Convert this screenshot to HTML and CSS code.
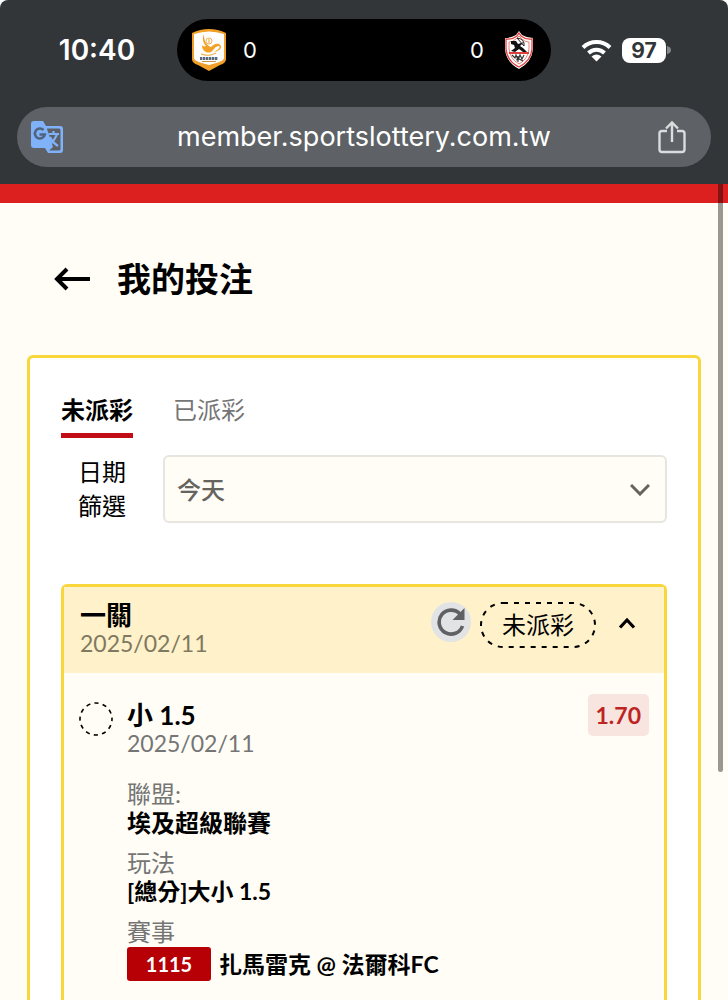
FILE: index.html
```html
<!DOCTYPE html>
<html lang="zh-Hant">
<head>
<meta charset="utf-8">
<meta name="viewport" content="width=device-width, initial-scale=1">
<title>我的投注</title>
<link rel="stylesheet" href="styles.css">
</head>
<body>
<div class="screen">
  <header class="chrome">
    <div class="status">
      <time class="clock">10:40</time>
      <div class="island">
        <svg class="crest-home" width="36" height="42" viewBox="0 0 36 42" aria-hidden="true">
          <path d="M1 4Q9 0 18 0T35 4V30Q35 34 29 36L18 42L7 36Q1 34 1 30Z" fill="#f0a029"/>
          <path d="M3 5Q11 2.500 18 2.500T33 5V29Q33 31 27 33.500L18 36L9 33.500Q3 31 3 29Z" fill="#fff"/>
          <path d="M13 5C11 10 12 14 15 17C13 18 12 17 11 16C11 22 16 25 20 23C23 21 24 17 28 17C30 18 27 21 23 23C30 22 32 17 28 15C25 14 22 16 20 18C15 16 13 12 13 5Z" fill="#f2a126"/>
          <circle cx="18" cy="12" r="3" fill="#fff" stroke="#eeb45d" stroke-width="1"/>
          <path d="M18 10v4M10 25q8 3 15 -1" fill="none" stroke="#f0a029" stroke-width="1"/>
          <path d="M9 29.500h18" stroke="#59687d" stroke-width="3" stroke-dasharray="2.400 .6"/>
          <path d="M11 32.500h14" stroke="#cb9346" stroke-width="1"/>
        </svg>
        <span class="score">0</span>
        <span class="score score-away">0</span>
        <svg class="crest-away" width="30" height="38" viewBox="0 0 30 38" aria-hidden="true">
          <path d="M15 0L18 4Q23 7 29 7V18Q28 31 15 38Q2 31 1 18V7Q7 7 12 4Z" fill="#fff"/>
          <path d="M15 2L17 5Q22 9 28 8V18Q27 30 15 36Q3 30 2 18V8Q8 9 13 5Z" fill="none" stroke="#df3f3b" stroke-width="1.3"/>
          <path d="M15 5L18 8Q21 11 25 11V18Q24 28 15 33Q6 28 5 18V11Q9 11 12 8Z" fill="#fff" stroke="#df6059" stroke-width=".8"/>
          <path d="M5 22h20" stroke="#df3f3b" stroke-width="2"/>
          <path d="M7 10h5l2 3 6-2-4 4 3 2 4 4h-4l-4-3-4 3-4-1 4-3-1-3-3-1Z" fill="#111"/>
          <path d="M13 7q8 1 7 8M13 7l7 8" stroke="#222" fill="none"/>
          <path d="M8 24l3 3 1-3 2 5 2-5 2 4 2-4M12 29l3-1 4 2M14 25v6" stroke="#333" stroke-width="1.2" fill="none"/>
        </svg>
      </div>
      <div class="signals">
        <svg width="31" height="24" viewBox="0 0 31 24" role="img" aria-label="Wi-Fi">
          <g fill="none" stroke="#fff" stroke-width="4">
            <path d="M2 9.500A19.500 19.500 0 0 1 29 9.500"/>
            <path d="M7.500 15A11.500 11.500 0 0 1 23.500 15"/>
          </g>
          <path d="M10.500 18.500Q15.500 14.500 20.500 18.500L15.500 23.500Z" fill="#fff"/>
        </svg>
        <span class="battery">97</span>
        <svg class="battery-cap" width="4" height="8" viewBox="0 0 4 8" aria-hidden="true"><path d="M0 0Q4 1 4 4T0 8Z" fill="#85898c"/></svg>
      </div>
    </div>
    <div class="address">
      <button class="icon-button" aria-label="翻譯">
        <svg width="34" height="34" viewBox="0 0 34 34" aria-hidden="true">
          <path d="M4 1H13L16 6H30Q33 6 33 9V30Q33 33 30 33H18L15 28H4Q1 28 1 25V4Q1 1 4 1Z" fill="#80b2fa"/>
          <path d="M17 8.500H29Q30.500 8.500 30.500 10V29Q30.500 30.500 29 30.500H19L23 27L17 9Z" fill="#5b6064"/>
          <path d="M18.500 14H29M23.500 11V14M27 14Q25 20 20 24M20 17Q22 22 28 26" fill="none" stroke="#80b2fa" stroke-width="2.200"/>
          <path d="M13.500 10A5 5 0 1 0 14.800 14.500H9.500" fill="none" stroke="#50647f" stroke-width="2.600"/>
        </svg>
      </button>
      <span class="url">member.sportslottery.com.tw</span>
      <button class="icon-button" aria-label="分享">
        <svg width="28" height="34" viewBox="0 0 28 34" fill="none" stroke="#dadcde" stroke-width="2.400" aria-hidden="true">
          <path d="M9 11H4Q1.500 11 1.500 13.500V29.500Q1.500 32 4 32H24Q26.500 32 26.500 29.500V13.500Q26.500 11 24 11H19"/>
          <path d="M14 22V2.500M8 8.500L14 2.500L20 8.500"/>
        </svg>
      </button>
    </div>
  </header>

  <main class="page">
    <div class="title-row">
      <button class="back" aria-label="返回">
        <svg width="36" height="24" viewBox="0 0 36 24" fill="none" stroke="#000" stroke-width="4" aria-hidden="true"><path d="M36 12H3M13 2L3 12L13 22"/></svg>
      </button>
      <h1>我的投注</h1>
    </div>

    <section class="panel">
      <nav class="tabs">
        <button class="tab tab-active">未派彩</button>
        <button class="tab">已派彩</button>
      </nav>

      <div class="filter">
        <label for="date-filter">日期<br>篩選</label>
        <div class="select-box">
          <select id="date-filter"><option>今天</option></select>
          <svg class="select-arrow" width="20" height="12" viewBox="0 0 20 12" fill="none" stroke="#66645f" stroke-width="3" aria-hidden="true"><path d="M1 1L10 10L19 1"/></svg>
        </div>
      </div>

      <article class="bet">
        <header class="bet-head">
          <div>
            <h2>一關</h2>
            <time class="date">2025/02/11</time>
          </div>
          <div class="bet-actions">
            <button class="refresh" aria-label="重新整理">
              <svg width="30" height="30" viewBox="0 0 30 30" aria-hidden="true">
                <path d="M24 7A12 12 0 1 0 26.500 19" fill="none" stroke="#5f6164" stroke-width="3.600"/>
                <path d="M28.500 1V13H16.500Z" fill="#5f6164"/>
              </svg>
            </button>
            <span class="state">
              <svg class="state-line" aria-hidden="true"><rect x="1" y="1" rx="22" ry="22"/></svg>
              未派彩
            </span>
            <button class="collapse" aria-label="收合">
              <svg width="18" height="12" viewBox="0 0 18 12" fill="none" stroke="#000" stroke-width="3.200" aria-hidden="true"><path d="M2 10.500L9 3L16 10.500"/></svg>
            </button>
          </div>
        </header>

        <div class="leg">
          <svg class="pending" width="34" height="34" viewBox="0 0 34 34" aria-hidden="true"><circle cx="17" cy="17" r="16" fill="none" stroke="#000" stroke-width="1.600" stroke-dasharray="4.200 4.178" stroke-dashoffset="2.100"/></svg>
          <div class="leg-body">
            <h3>小 1.5</h3>
            <time class="date">2025/02/11</time>
            <dl class="details">
              <div><dt>聯盟:</dt><dd>埃及超級聯賽</dd></div>
              <div><dt>玩法</dt><dd class="mixed">[總分]大小 1.5</dd></div>
              <div><dt>賽事</dt><dd class="mixed match"><span class="code">1115</span>扎馬雷克 @ 法爾科FC</dd></div>
            </dl>
          </div>
          <strong class="odds">1.70</strong>
        </div>
      </article>
    </section>
    <div class="scrollbar"></div>
  </main>
</div>
</body>
</html>
```
FILE: styles.css
```css
* { box-sizing: border-box; }

body {
  margin: 0;
  background: #fff;
  color: #000;
  font: 24px/28px Lato, "Noto Sans CJK TC", sans-serif;
}

h1, h2, h3, dl, dd { margin: 0; }

button {
  padding: 0;
  border: 0;
  background: none;
  color: inherit;
  font: inherit;
}

svg { display: block; flex: none; }

.screen {
  display: flex;
  flex-direction: column;
  height: 100vh;
  overflow: hidden;
}

/* Phone status bar and browser address bar */
.chrome {
  padding: 19px 17px 17px;
  border-radius: 8px 8px 0 0;
  background: #323639;
  color: #fff;
  font-family: Inter, "Liberation Sans", sans-serif;
}

.status {
  display: grid;
  grid-template-columns: 1fr 374px 1fr;
  align-items: center;
  height: 62px;
}

.clock {
  text-align: center;
  font-size: 28px;
  font-weight: 600;
}

.island {
  display: flex;
  align-items: center;
  height: 62px;
  padding: 0 17px 0 14px;
  border-radius: 31px;
  background: #000;
}

.score { margin-left: 16px; font-size: 22px; }
.score-away { margin: 0 20px 0 auto; }

.signals {
  display: flex;
  align-items: center;
  padding-left: 30px;
}

.battery {
  width: 44px;
  margin-left: 10px;
  border-radius: 8px;
  background: #fff;
  color: #323639;
  font-size: 21px;
  font-weight: 700;
  line-height: 25px;
  text-align: center;
}

.battery-cap { margin-left: 1px; }

.address {
  display: flex;
  align-items: center;
  height: 60px;
  margin-top: 26px;
  padding: 0 25px 0 13px;
  border-radius: 30px;
  background: #5e6266;
}

.url {
  flex: 1;
  padding-left: 6px;
  font-size: 27px;
  text-align: center;
}

/* Page */
.page {
  position: relative;
  flex: 1;
  min-height: 0;
  padding: 51px 27px 0;
  border-top: 19px solid #dc1f1f;
  background: #fffdf5;
}

.title-row {
  display: flex;
  align-items: center;
  gap: 27px;
  padding-left: 27px;
}

h1 {
  font-size: 34px;
  font-weight: 700;
  line-height: 50px;
}

.panel {
  margin-top: 51px;
  padding: 34px 31px;
  border: 3px solid #f9d73b;
  border-radius: 6px;
  background: #fff;
}

.tabs { display: flex; gap: 40px; }

.tab {
  padding-bottom: 5px;
  border-bottom: 5px solid transparent;
  color: #757575;
  line-height: 36px;
}

.tab-active {
  border-color: #c20d16;
  color: #000;
  font-weight: 700;
}

.filter {
  display: flex;
  align-items: center;
  gap: 37px;
  margin-top: 17px;
  padding-left: 17px;
  line-height: 34px;
}

.select-box { position: relative; flex: 1; }

select {
  display: block;
  width: 100%;
  height: 68px;
  padding: 0 12px;
  appearance: none;
  border: 2px solid #e7e5df;
  border-radius: 6px;
  background: #fffdf5;
  color: #66645f;
  font: 500 24px Lato, "Noto Sans CJK TC", sans-serif;
}

.select-arrow {
  position: absolute;
  top: 29px;
  right: 17px;
  pointer-events: none;
}

.bet {
  margin-top: 61px;
  border: 3px solid #f9d73b;
  border-radius: 6px;
  background: #fffdf5;
}

.bet-head {
  display: flex;
  justify-content: space-between;
  padding: 14px 16px 16px;
  background: #fff1c9;
}

h2, h3 { font-size: 26px; line-height: 28px; }

.date { display: block; color: #757575; font-size: 23px; }
.bet-head .date { color: #807961; }

.bet-actions {
  display: flex;
  align-items: flex-start;
  padding: 1px 12px 0 0;
}

.refresh {
  display: grid;
  place-items: center;
  width: 40px;
  height: 40px;
  border-radius: 50%;
  background: #e2e3e5;
}

.state {
  position: relative;
  margin: 0 22px 0 9px;
  padding: 0 22px;
  line-height: 46px;
}

.state-line {
  position: absolute;
  inset: 0;
  width: 100%;
  height: 100%;
}

.state-line rect {
  width: calc(100% - 2px);
  height: calc(100% - 2px);
  fill: none;
  stroke: #000;
  stroke-width: 2px;
  stroke-dasharray: 5px 6px;
}

.collapse {
  display: grid;
  place-items: center;
  height: 42px;
}

.leg {
  display: flex;
  align-items: flex-start;
  padding: 28px 15px;
}

.pending { margin: 1px 14px 0 0; }
.leg-body { flex: 1; }

.odds {
  margin-top: -7px;
  padding: 0 8px;
  border-radius: 5px;
  background: #f8e5df;
  color: #bd2424;
  font-size: 23px;
  line-height: 42px;
}

.details {
  display: grid;
  gap: 11px;
  margin-top: 22px;
  line-height: 29px;
}

dt { color: #757575; }
dd { font-weight: 700; }
.mixed { font-size: 23px; }

.match {
  display: flex;
  align-items: center;
  gap: 8px;
  padding-top: 1px;
  line-height: 34px;
}

.code {
  width: 84px;
  border-radius: 3px;
  background: #b60005;
  color: #fff;
  font-size: 20px;
  text-align: center;
}

.scrollbar {
  position: absolute;
  top: -19px;
  right: 5px;
  width: 5px;
  height: 588px;
  border-radius: 0 0 3px 3px;
  background: rgba(0, 0, 0, .4);
}
```
